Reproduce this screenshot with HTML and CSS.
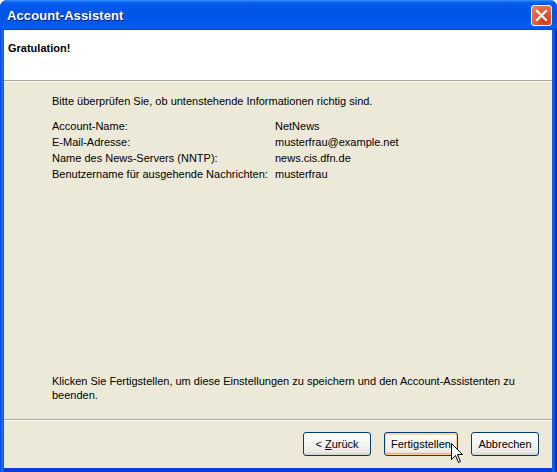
FILE: index.html
```html
<!DOCTYPE html>
<html lang="de">
<head>
<meta charset="utf-8">
<title>Account-Assistent</title>
<link rel="stylesheet" href="styles.css">
</head>
<body>
<div class="window">
  <div class="titlebar">
    <span class="title">Account-Assistent</span>
    <span class="close" aria-label="Schließen">
      <svg width="13" height="13" viewBox="0 0 13 13"><path d="M2 2 L11 11 M11 2 L2 11" stroke="#fff" stroke-width="2.2" stroke-linecap="square"/></svg>
    </span>
  </div>
  <div class="frame">
    <div class="client">
      <div class="header">Gratulation!</div>
      <div class="content">
        <p class="intro">Bitte überprüfen Sie, ob untenstehende Informationen richtig sind.</p>
        <div class="summary">
          <span>Account-Name:</span><span>NetNews</span>
          <span>E-Mail-Adresse:</span><span>musterfrau@example.net</span>
          <span>Name des News-Servers (NNTP):</span><span>news.cis.dfn.de</span>
          <span>Benutzername für ausgehende Nachrichten:</span><span>musterfrau</span>
        </div>
        <p class="finish">Klicken Sie Fertigstellen, um diese Einstellungen zu speichern und den Account-Assistenten zu beenden.</p>
      </div>
      <div class="buttons">
        <button class="btn btn-back">&lt; <u>Z</u>urück</button>
        <button class="btn btn-finish">Fertigstellen</button>
        <button class="btn btn-cancel">Abbrechen</button>
      </div>
    </div>
  </div>
  <svg class="cursor" width="13" height="21" viewBox="0 0 13 21"><path d="M0.5 0.5 L0.5 16.5 L4.5 12.5 L7.5 19.5 L9.5 18.5 L6.5 11.5 L11.5 11.5 Z" fill="#fff" stroke="#000" stroke-width="1"/></svg>
</div>
</body>
</html>
```
FILE: styles.css
```css
html, body {
  margin: 0;
  padding: 0;
  background: #ffffff;
}
body {
  width: 557px;
  height: 472px;
  overflow: hidden;
  font-family: "Liberation Sans", Arial, sans-serif;
  font-size: 11px;
  color: #000;
}
.window {
  position: relative;
  width: 557px;
  height: 472px;
  display: flex;
  flex-direction: column;
  border-radius: 7px 7px 0 0;
  overflow: hidden;
  background: #0831d9;
}
.titlebar {
  height: 30px;
  flex: none;
  display: flex;
  align-items: center;
  justify-content: space-between;
  padding: 0 5px 0 7px;
  background: linear-gradient(to bottom, #3d95ff 0%, #0a6af5 6%, #0058ee 14%, #0054e3 45%, #0058ec 80%, #0061f5 90%, #0055e5 96%, #0046d0 100%);
}
.title {
  color: #fff;
  font-weight: bold;
  font-size: 13px;
  text-shadow: 1px 1px 0 #0a1e8c;
  letter-spacing: 0.1px;
  margin-top: 1px;
}
.close {
  width: 21px;
  height: 21px;
  box-sizing: border-box;
  border: 1px solid #ffffff;
  border-radius: 3px;
  background: radial-gradient(circle at 70% 80%, #c93b16 0%, #dd5a36 45%, #e8794f 85%, #f0a084 100%);
  display: flex;
  align-items: center;
  justify-content: center;
  margin-top: 1px;
}
.close svg { display: block; }
.frame {
  flex: 1;
  display: flex;
  padding: 0 5px 4px 4px;
  min-height: 0;
  background:
    linear-gradient(to right, #0842d6 0px, #1c6cff 2px, #1c6cff 3px, transparent 4px),
    linear-gradient(to left, #0022aa 0px, #0842d6 2px, #1c6cff 4px, transparent 5px),
    #0b3fd4;
}
.client {
  flex: 1;
  display: flex;
  flex-direction: column;
  background: #ece9d8;
  min-width: 0;
}
.header {
  height: 51px;
  box-sizing: border-box;
  background: #fff;
  font-weight: bold;
  padding: 12px 0 0 4px;
  border-bottom: 1px solid #aca899;
  box-shadow: 0 1px 0 #ffffff;
  flex: none;
}
.content {
  flex: 1;
  display: flex;
  flex-direction: column;
  padding: 14px 20px 0 48px;
  border-bottom: 1px solid #aca899;
  box-shadow: 0 1px 0 #ffffff;
}
.content p { margin: 0; }
.intro {
  line-height: 13px;
}
.summary {
  display: grid;
  grid-template-columns: 223px auto;
  grid-auto-rows: 16px;
  align-items: center;
  margin-top: 10px;
}
.finish {
  margin-top: auto !important;
  line-height: 14px;
  padding-bottom: 17px;
}
.buttons {
  height: 48px;
  flex: none;
  display: flex;
  justify-content: flex-end;
  align-items: flex-start;
  padding: 12px 13px 0 0;
  box-sizing: border-box;
  gap: 13px;
}
.btn {
  height: 24px;
  box-sizing: border-box;
  font-family: "Liberation Sans", Arial, sans-serif;
  font-size: 11px;
  color: #000;
  border: 1px solid #003c74;
  border-radius: 3px;
  background: linear-gradient(to bottom, #ffffff 0%, #f6f6f3 40%, #ecebe5 85%, #d6d0c5 100%);
  padding: 0;
  margin: 0;
}
.btn u { text-decoration: underline; }
.btn-back { width: 68px; }
.btn-finish {
  width: 74px;
  box-shadow: inset 0 0 0 1px #ffd38c, inset 0 -1px 0 1px #f9b14b, inset 0 1px 0 1px #ffe6b0;
}
.btn-cancel { width: 68px; }
.cursor {
  position: absolute;
  left: 451px;
  top: 443px;
}
```
